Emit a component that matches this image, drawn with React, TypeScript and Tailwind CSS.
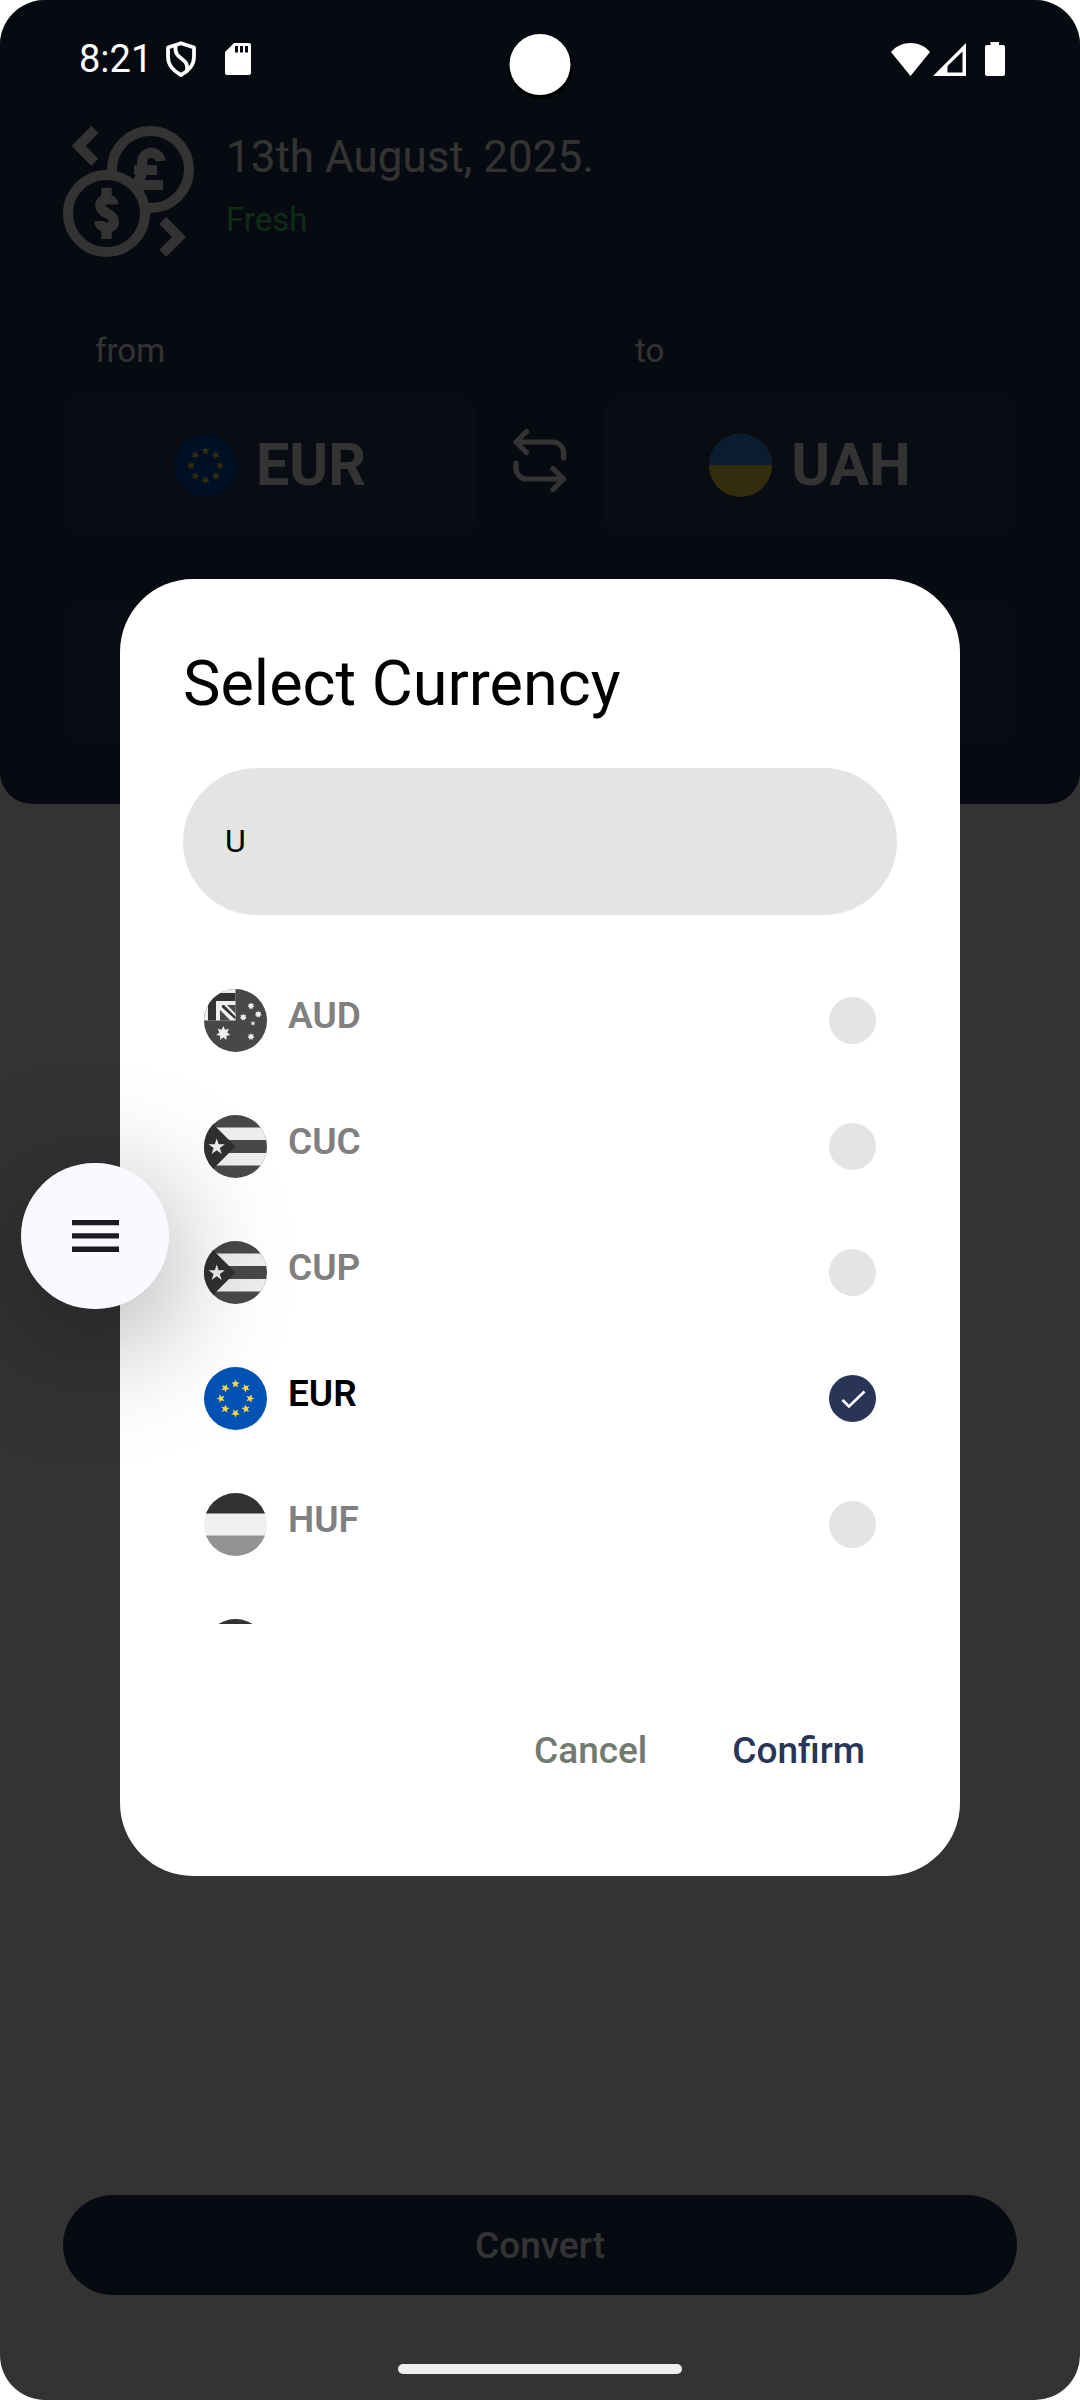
import { useState } from "react";

function starPoints(cx: number, cy: number, r: number, tips = 5, inner = 0.4, turn = 0) {
  return Array.from({ length: tips * 2 }, (_, i) => {
    const a = (i * Math.PI) / tips - Math.PI / 2 + (turn * Math.PI) / 180;
    const q = i % 2 ? r * inner : r;
    return `${(cx + q * Math.cos(a)).toFixed(2)},${(cy + q * Math.sin(a)).toFixed(2)}`;
  }).join(" ");
}

function FlagArt({ code }: { code: string }) {
  switch (code) {
    case "AUD":
      return (
        <>
          <rect width="63" height="63" fill="#484848" />
          <rect width="31.5" height="31.5" fill="#eeeeee" />
          <path d="M4 4H31.5V12H12V31.5H4Z" fill="#333333" />
          <path d="M23 16H31.5V24.5Z M16 21V31.5H26.5Z" fill="#484848" />
          <path d="M16 16H21L31.5 26.5V31.5L16 18Z" fill="#eeeeee" />
          <path d="M18.5 16H20L31.5 27.5V30.5L17.5 18Z" fill="#333333" />
          <polygon points={starPoints(19.3, 44.3, 7.3, 7, 0.55)} fill="#eeeeee" />
          <polygon points={starPoints(47, 17, 3.6, 7, 0.6)} fill="#eeeeee" />
          <polygon points={starPoints(39.3, 28.3, 3.6, 7, 0.6)} fill="#eeeeee" />
          <polygon points={starPoints(54.3, 25.3, 3.6, 7, 0.6)} fill="#eeeeee" />
          <polygon points={starPoints(49, 34.3, 2.8)} fill="#eeeeee" />
          <polygon points={starPoints(47, 47.7, 3.6, 7, 0.6)} fill="#eeeeee" />
        </>
      );
    case "CUC":
    case "CUP":
      return (
        <>
          <rect width="63" height="63" fill="#484848" />
          <path d="M0 12.5H63V25H0Z M0 38H63V50.5H0Z" fill="#eeeeee" />
          <path d="M0 0L31.5 31.5L0 63Z" fill="#303030" />
          <polygon points={starPoints(12.7, 32, 8.6, 5, 0.38)} fill="#eeeeee" />
        </>
      );
    case "EUR":
      return (
        <>
          <rect width="63" height="63" fill="#0052b4" />
          {[0, 45, 90, 135, 180, 225, 270, 315].map((t) => {
            const a = (t * Math.PI) / 180;
            return (
              <polygon
                key={t}
                points={starPoints(31.5 + 14.6 * Math.sin(a), 31.5 - 14.6 * Math.cos(a), 4.5, 5, 0.42, t)}
                fill="#ffda44"
              />
            );
          })}
        </>
      );
    case "UAH":
      return (
        <>
          <rect width="63" height="63" fill="#ffda44" />
          <rect width="63" height="31" fill="#338af3" />
        </>
      );
    case "HUF":
      return (
        <>
          <rect width="63" height="63" fill="#f0f0f0" />
          <rect width="63" height="20.5" fill="#323232" />
          <rect y="42.5" width="63" height="20.5" fill="#929292" />
        </>
      );
    default:
      return <rect width="63" height="63" fill="#323232" />;
  }
}

function Flag({ code }: { code: string }) {
  return (
    <svg viewBox="0 0 63 63" className="size-[63px] shrink-0 rounded-full" aria-hidden="true">
      <FlagArt code={code} />
    </svg>
  );
}

function Logo() {
  return (
    <svg viewBox="0 0 131 131" className="size-[131px] shrink-0" fill="none" stroke="#fff" strokeWidth="10" aria-hidden="true">
      <circle cx="87.5" cy="43.5" r="38.5" />
      <path d="M97.5 35A9.2 9.2 0 0 0 79.2 35V44Q79.2 52 72 58" />
      <path d="M71 39H94V49H71Z M73 54H100V64H73Z" fill="#fff" stroke="none" />
      <circle cx="43.5" cy="87.5" r="38.5" fill="#283556" />
      <path d="M50 78.5C50 74.5 47 73.3 44 73.3C40 73.3 37.3 75.5 37.3 79C37.3 83.5 41 85.5 44.5 87.5C48.5 89.7 51 92 51 96C51 99.8 48 101.5 44 101.5C40 101.5 36.5 99.5 36.5 95" />
      <path d="M38.3 61.7H48.7V72H38.3Z M38.3 103H48.7V113H38.3Z" fill="#fff" stroke="none" />
      <path
        d="M28.3 0L35.3 7L22.7 20L35.3 32.7L28.3 39.7L8.7 20Z M103.3 91L123 111L103.3 130.7L96.3 123.7L109 111L96.3 98Z"
        fill="#fff"
        stroke="none"
      />
    </svg>
  );
}

function StatusBar() {
  return (
    <div className="absolute inset-x-0 top-0 flex items-center justify-between pt-[33px] pr-[75px] pl-[79px] text-white">
      <div className="flex items-center">
        <span className="text-[38px] leading-[52px]">8:21</span>
        <svg viewBox="0 0 30 36" className="ml-3.5 h-9 w-[30px]" fill="none" stroke="#fff" strokeWidth="3.8" aria-hidden="true">
          <path d="M15 2.2L28 6.5V16C28 24 22 30.5 15 34C8 30.5 2 24 2 16V6.5Z" strokeLinejoin="round" />
          <path d="M9.5 4.5C9 13 11.5 14.5 16 18C21 21.5 22.5 25 20.5 30.5" />
        </svg>
        <svg viewBox="0 0 26 32" className="ml-[29px] h-8 w-[26px]" fill="#fff" aria-hidden="true">
          <path
            fillRule="evenodd"
            d="M9 0H24A2 2 0 0 1 26 2V30A2 2 0 0 1 24 32H2A2 2 0 0 1 0 30V9Z M10 3V9.5H13V3Z M15 3V9.5H18V3Z M20 3V9.5H23V3Z"
          />
        </svg>
      </div>
      <div className="flex items-center">
        <svg viewBox="0 0 39 33" className="h-[33px] w-[39px]" fill="#fff" aria-hidden="true">
          <path d="M0 9C10 -3 29 -3 39 9L19.5 33Z" />
        </svg>
        <svg viewBox="0 0 33 33" className="ml-[3px] size-[33px]" fill="#fff" aria-hidden="true">
          <path fillRule="evenodd" d="M33 0V33H0Z M29.5 8.5L14.5 23V29.5H29.5Z" />
        </svg>
        <svg viewBox="0 0 20 34" className="ml-[19px] h-[34px] w-5" fill="#fff" aria-hidden="true">
          <path d="M5.5 0H14V3H18A2 2 0 0 1 20 5V32A2 2 0 0 1 18 34H2A2 2 0 0 1 0 32V5A2 2 0 0 1 2 3H5.5Z" />
        </svg>
      </div>
      <div className="absolute top-[34px] left-1/2 size-[61px] -translate-x-1/2 rounded-full bg-white shadow-[1px_3px_0_1px_#000]" />
    </div>
  );
}

function CurrencyField({ label, code }: { label: string; code: string }) {
  return (
    <div className="flex flex-1 flex-col gap-[22px]">
      <span className="pl-8 text-[33px] leading-[42px]">{label}</span>
      <button
        type="button"
        aria-label={`${label} ${code}`}
        className="flex h-[142px] items-center justify-center gap-[19px] rounded-[21px] bg-white/5 text-[59px] font-bold"
      >
        <Flag code={code} />
        {code}
      </button>
    </div>
  );
}

function CurrencyRow({ code, checked, onPick }: { code: string; checked: boolean; onPick: () => void }) {
  return (
    <label className="flex h-[126px] items-center gap-[21px] px-[21px]">
      <Flag code={code} />
      <span className={checked ? "flex-1 pb-2 text-[37px] font-semibold text-black" : "flex-1 pb-2 text-[37px] font-semibold text-[#808080]"}>
        {code}
      </span>
      <span className="relative size-[47px]">
        <input
          type="radio"
          name="currency"
          checked={checked}
          onChange={onPick}
          className="block size-[47px] appearance-none rounded-full bg-[#e4e4e4] checked:bg-[#283556]"
        />
        {checked && (
          <svg viewBox="0 0 47 47" className="pointer-events-none absolute inset-0" fill="none" stroke="#fff" strokeWidth="2.6" aria-hidden="true">
            <path d="M13.5 25L20 31.5L35.5 16.5" />
          </svg>
        )}
      </span>
    </label>
  );
}

const codes = ["AUD", "CUC", "CUP", "EUR", "HUF"];

export default function App() {
  const [selected, setSelected] = useState("EUR");
  const [query, setQuery] = useState("U");

  return (
    <div className="bg-white font-['Roboto',sans-serif]">
      <div className="relative flex min-h-screen flex-col overflow-hidden rounded-[45px] bg-white">
        <header className="rounded-b-[32px] bg-[#283556] px-[63px] pt-[126px] pb-[63px] text-white">
          <div className="flex gap-8">
            <Logo />
            <div className="flex flex-col">
              <h1 className="text-[44px] leading-[63px]">13th August, 2025.</h1>
              <p className="text-[33px] leading-[62px] text-[#46e070]">Fresh</p>
            </div>
          </div>
          <div className="mt-[73px] flex items-end">
            <CurrencyField label="from" code="EUR" />
            <button type="button" aria-label="Swap currencies" className="flex h-[142px] w-[126px] items-center justify-center pb-2.5">
              <svg viewBox="0 0 54 63" className="h-[63px] w-[54px]" fill="none" stroke="#fff" strokeWidth="5.2" strokeLinecap="round" strokeLinejoin="round" aria-hidden="true">
                <path d="M13.5 2.6L3 13L13.5 23.5 M3 13H39A11 11 0 0 1 50.5 24.5V29" />
                <path d="M40 39.5L50.5 50L40 60.5 M50.5 50H14A11 11 0 0 1 3 38.5V34" />
              </svg>
            </button>
            <CurrencyField label="to" code="UAH" />
          </div>
          <div className="mt-[63px] h-[142px] rounded-[21px] bg-white/5" />
        </header>
        <main className="flex flex-1 flex-col justify-end px-[63px] pb-[105px]">
          <button type="button" className="h-[100px] rounded-full bg-[#283556] pt-0.5 text-[37px] font-medium text-white">
            Convert
          </button>
        </main>

        <div className="absolute inset-0 flex items-center justify-center bg-black/80 px-[120px] pt-[55px]">
          <div role="dialog" aria-labelledby="dialog-title" className="flex w-full flex-col rounded-[73px] bg-white p-[63px] text-black">
            <h2 id="dialog-title" className="text-[63px] leading-[84px]">
              Select Currency
            </h2>
            <input
              type="text"
              aria-label="Search currency"
              value={query}
              onChange={(e) => setQuery(e.target.value)}
              className="mt-[42px] h-[147px] w-full rounded-full bg-[#e4e4e4] px-[42px] pb-0.5 text-[32px] outline-none"
            />
            <div role="radiogroup" aria-label="Currencies" className="mt-[42px] max-h-[667px] overflow-hidden">
              {codes.map((code) => (
                <CurrencyRow key={code} code={code} checked={code === selected} onPick={() => setSelected(code)} />
              ))}
              <div className="flex h-[126px] items-center px-[21px]">
                <Flag code="" />
              </div>
            </div>
            <div className="mt-[63px] flex justify-end gap-[21px] text-[37px] font-medium">
              <button type="button" className="h-[126px] px-8 pt-0.5 text-[#737b71]">
                Cancel
              </button>
              <button type="button" className="h-[126px] px-8 pt-0.5 text-[#283556]">
                Confirm
              </button>
            </div>
          </div>
        </div>

        <button
          type="button"
          aria-label="Menu"
          className="absolute top-[1163px] left-[21px] flex h-[146px] w-[148px] items-center justify-center rounded-full bg-[#faf9ff] shadow-[0_28px_125px_rgba(0,0,0,0.4)]"
        >
          <svg viewBox="0 0 47 32" className="h-8 w-[47px]" fill="#1b1b21" aria-hidden="true">
            <path d="M0 0H47V5.3H0Z M0 13.3H47V18.6H0Z M0 26.6H47V32H0Z" />
          </svg>
        </button>

        <StatusBar />
        <div className="absolute bottom-[26px] left-1/2 h-2.5 w-[284px] -translate-x-1/2 rounded-full bg-[#eeeeee]" />
      </div>
    </div>
  );
}
